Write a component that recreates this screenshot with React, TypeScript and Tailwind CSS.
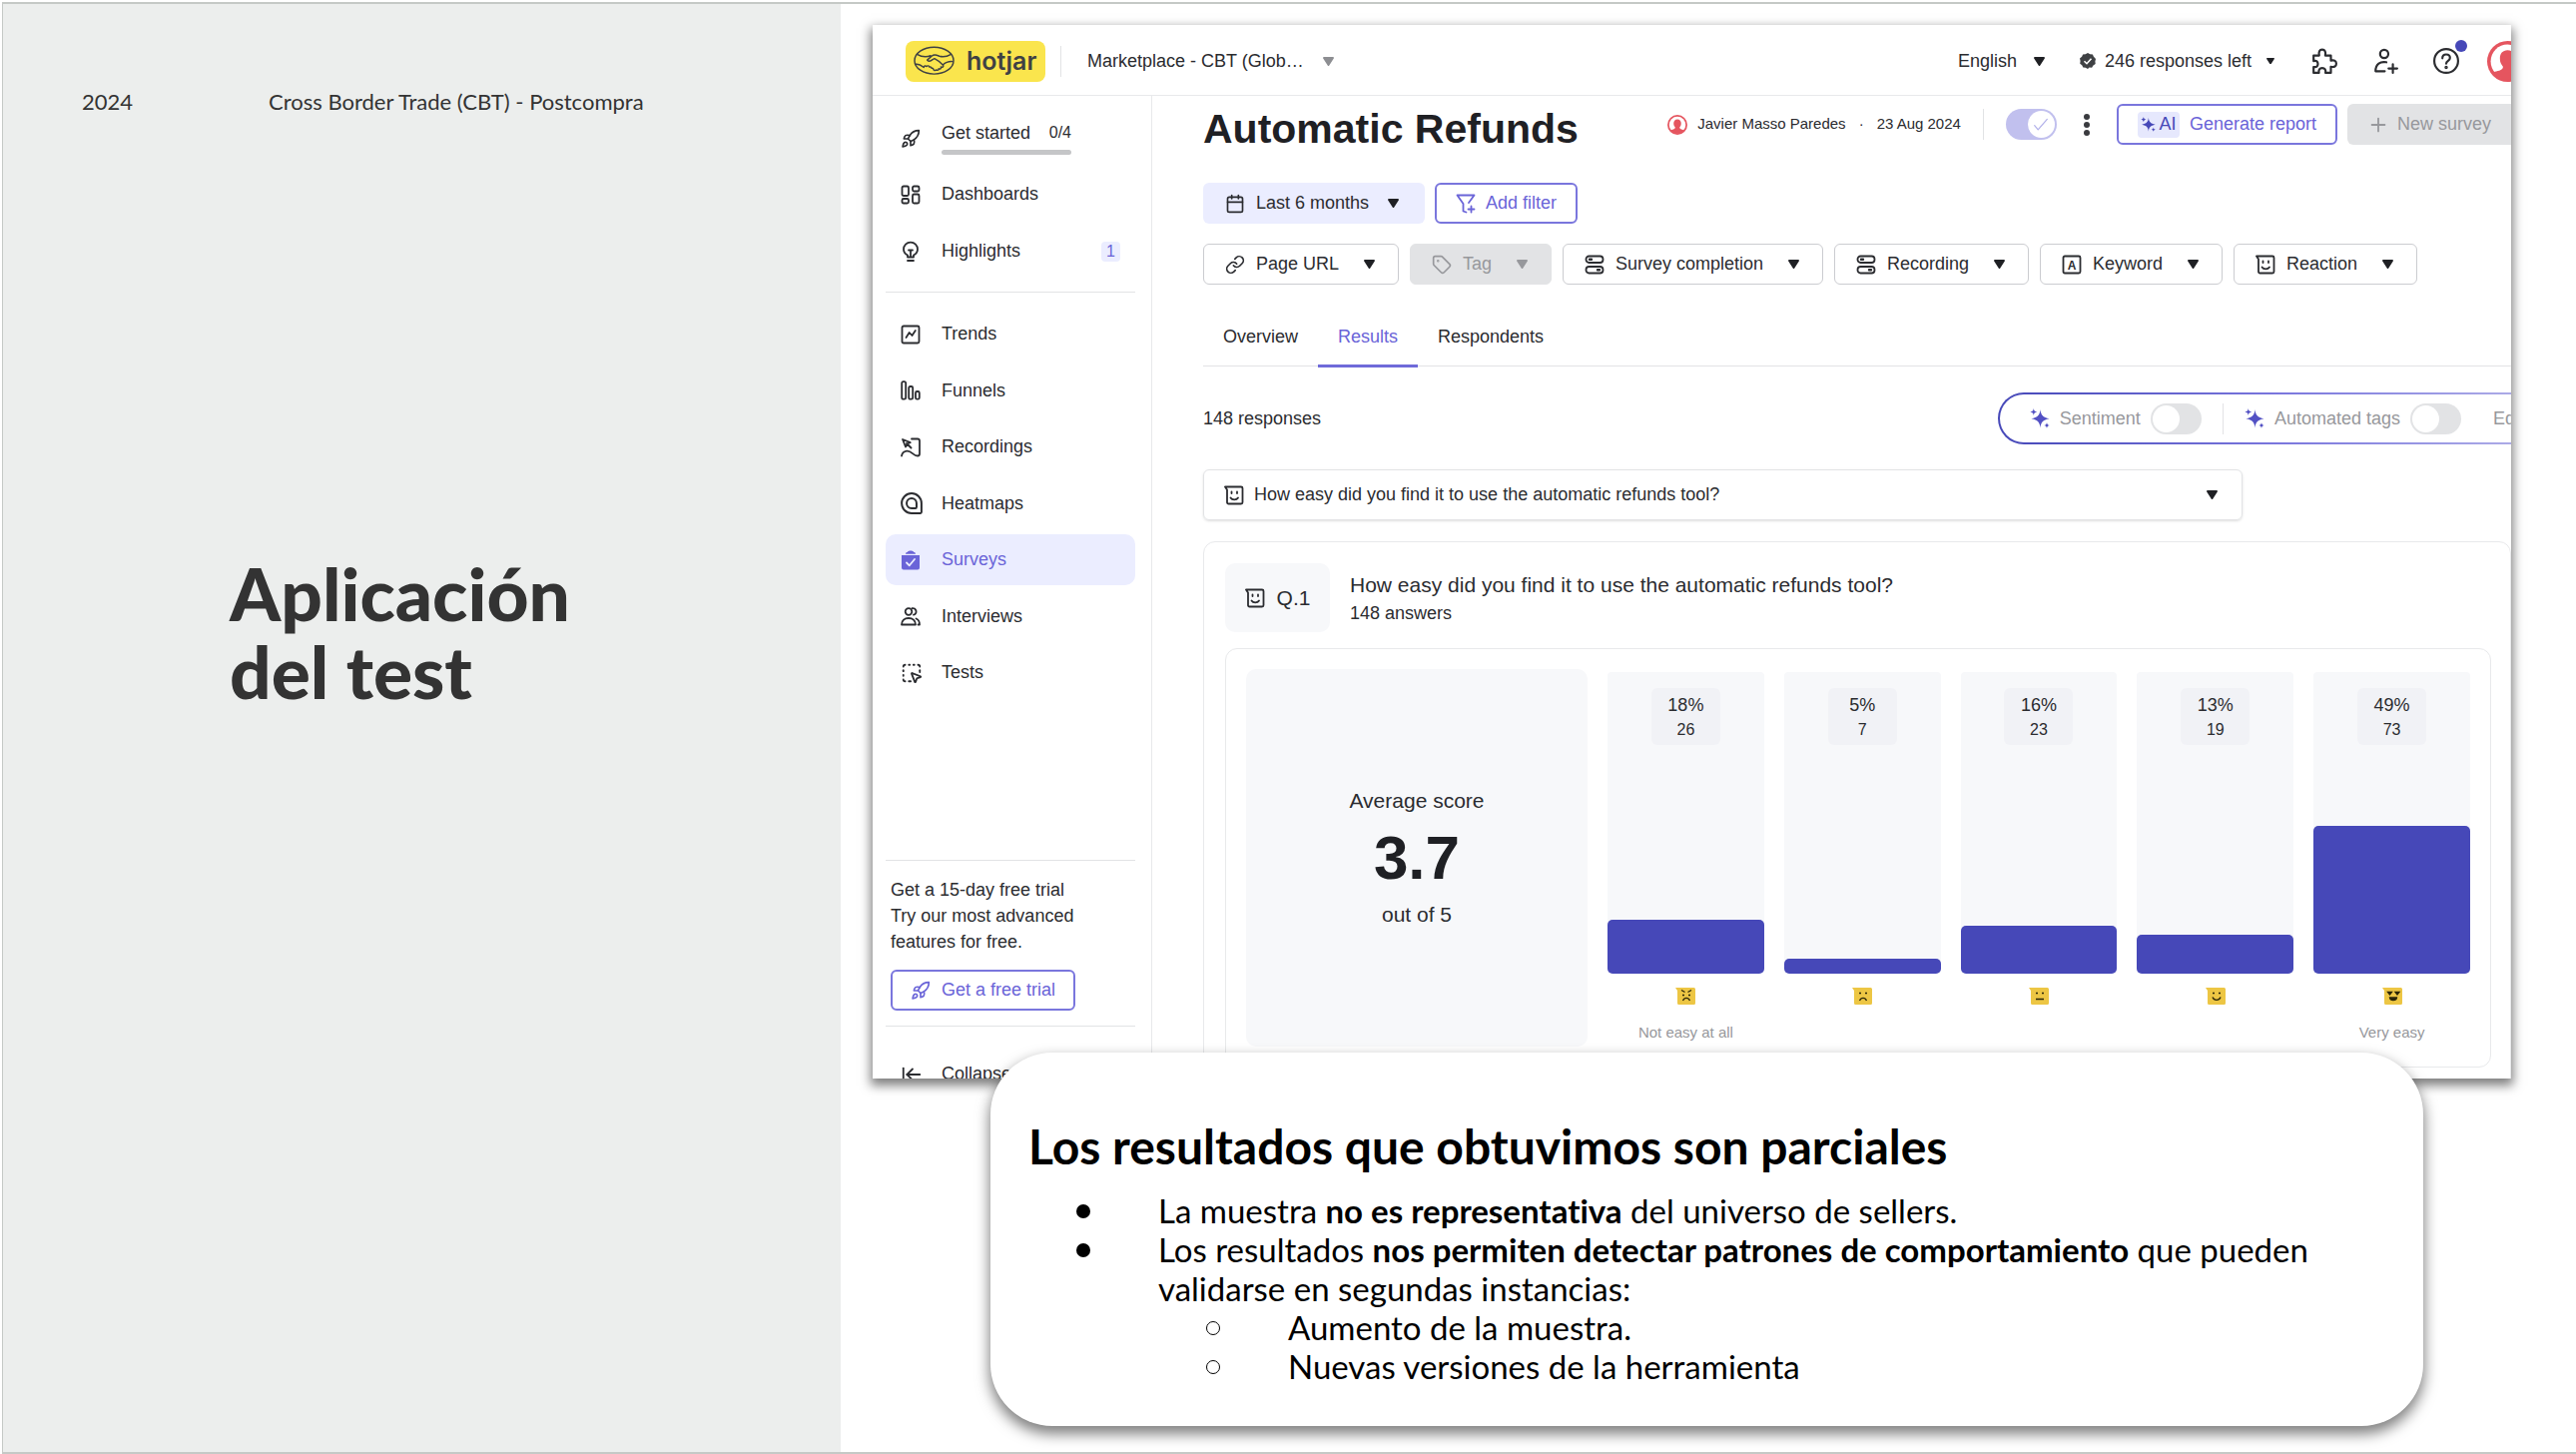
import type { ReactNode } from "react";
import { ArrowLeftToLine, Calendar, Link, Plus, Rocket, SquareDashedMousePointer, Tag } from "lucide-react";

function Icon({ className = "size-5", children }: { className?: string; children: ReactNode }) {
  return (
    <svg
      viewBox="0 0 20 20"
      className={`shrink-0 ${className}`}
      fill="none"
      stroke="currentColor"
      strokeWidth="1.8"
      strokeLinecap="round"
      strokeLinejoin="round"
      aria-hidden="true"
    >
      {children}
    </svg>
  );
}

const DashboardsIcon = () => (
  <Icon>
    <rect x="1.5" y="1.5" width="6.5" height="9.5" rx="1.5" />
    <rect x="12" y="1.5" width="6.5" height="5" rx="1.5" />
    <rect x="1.5" y="14" width="6.5" height="4.5" rx="1.5" />
    <rect x="12" y="9.5" width="6.5" height="9" rx="1.5" />
  </Icon>
);

const BulbIcon = () => (
  <Icon className="h-[22px] w-5">
    <path d="M7 15.5v-2C4.5 12.3 3 10.3 3 7.6a7 7 0 0 1 14 0c0 2.7-1.5 4.7-4 5.9v2zM7 19h6M8 8.5h4M10 8.5v6" />
  </Icon>
);

const TrendsIcon = () => (
  <Icon>
    <rect x="1.5" y="1.5" width="17" height="17" rx="1.5" />
    <path d="M5.5 13l3.2-5 2.8 3 3.3-5" />
  </Icon>
);

const FunnelsIcon = () => (
  <Icon>
    <rect x="1.2" y="1.2" width="4" height="17.5" rx="1.5" />
    <rect x="8.2" y="6" width="4" height="12.7" rx="1.5" />
    <rect x="15" y="11" width="3.8" height="7.7" rx="1.5" />
  </Icon>
);

const RecordingsIcon = () => (
  <Icon>
    <path d="M2 2l3 7.5 1.5-3 3.2-1.4zM6 6l4.5 4.5M11 1.5h6a2 2 0 0 1 2 2v13a2 2 0 0 1-2 2c-4.5 0-6-5.5-11-4.8-2.5.4-4.5 2-5 4.8" />
  </Icon>
);

const HeatmapsIcon = () => (
  <Icon className="size-[22px]">
    <path d="M10 1a9 9 0 1 0 0 18h8a1 1 0 0 0 1-1v-8a9 9 0 0 0-9-9z" />
    <path d="M10 5.5a4.5 4.5 0 1 0 0 9h3.5a1 1 0 0 0 1-1V10a4.5 4.5 0 0 0-4.5-4.5z" />
  </Icon>
);

const SurveysIcon = () => (
  <Icon className="h-[22px] w-5">
    <path d="M1 5h18v12.500a2 2 0 0 1-2 2H3a2 2 0 0 1-2-2zM5 3.800c0-1.200.7-1.800 1.700-1.800C7.500 0 12.500 0 13.300 2c1 0 1.700.6 1.700 1.800z" fill="currentColor" stroke="none" />
    <path d="M6 12.500l2.800 2.800L14 9" stroke="#ebedff" />
  </Icon>
);

const InterviewsIcon = () => (
  <Icon>
    <circle cx="8" cy="5.5" r="3.3" />
    <path d="M11.5 2.2a3.3 3.3 0 1 1 1.5 6.5M1 18.5c0-4 3-6.5 7-6.5s7 2.5 7 6.5zM15.5 12.5c2.2.8 3.5 3 3.5 6h-1.5" />
  </Icon>
);

const SwitchesIcon = () => (
  <Icon>
    <rect x="1.5" y="1.5" width="17" height="6.5" rx="3" />
    <rect x="1.5" y="12" width="17" height="6.5" rx="3" />
    <path d="M5 4.8h2M13 15.2h2" strokeWidth="2.4" />
  </Icon>
);

const KeywordIcon = () => (
  <Icon>
    <rect x="1.5" y="1.5" width="17" height="17" rx="1.5" />
    <text x="10" y="14.5" textAnchor="middle" fontSize="12" fontWeight="700" fill="currentColor" stroke="none">
      A
    </text>
  </Icon>
);

const ReactionIcon = () => (
  <Icon>
    <path d="M1 1.5h16a1.5 1.5 0 0 1 1.5 1.5v14a1.5 1.5 0 0 1-1.5 1.5H4.5A1.5 1.5 0 0 1 3 17V4.5z" />
    <path d="M6.5 12.5c1.5 2.4 6 2.4 7.5 0" />
    <path d="M7.5 6.5v1.5M13 6.5v1.5" />
  </Icon>
);

const FilterPlusIcon = () => (
  <Icon>
    <path d="M1.5 1.5h17L13 9M1.5 1.5L7.5 10v7.5l3 1M15.5 12.5v6M12.5 15.5h6" />
  </Icon>
);

const SparkleIcon = ({ className = "size-5" }: { className?: string }) => (
  <Icon className={className}>
    <g fill="currentColor" stroke="none">
      <path d="M10.5 1c.5 5.500 2.500 8 9 9.200-6.500 1.200-8.500 3.700-9 9.300-.5-5.600-2.500-8.100-9-9.300 6.500-1.200 8.500-3.700 9-9.200z" />
      <path d="M8 7.500h5v5.300H8z" />
      <path d="M3.800 0c.3 2.200 1.200 3.100 3.400 3.500C5 3.900 4.100 4.800 3.800 7 3.500 4.800 2.600 3.900.4 3.500 2.600 3.100 3.500 2.200 3.800 0z" />
      <path d="M17 14c.2 1.900 1 2.700 2.900 3-1.900.3-2.700 1.100-2.900 3-.2-1.900-1-2.700-2.900-3 1.900-.3 2.700-1.100 2.900-3z" />
    </g>
  </Icon>
);

const PuzzleIcon = () => (
  <svg viewBox="0 0 24 24" className="size-[26px] shrink-0" fill="none" stroke="currentColor" strokeWidth="2" strokeLinejoin="round" aria-hidden="true">
    <path d="M2 7h5.200C6.500 3.500 7.500 1.500 10 1.500S13.500 3.500 12.800 7H18v4.700c3.300-.7 5 .3 5 2.800s-1.700 3.500-5 2.800V23h-5c.6-3-.6-4.500-3-4.500S6.400 20 7 23H2v-5.500c2.800.6 4-.6 4-2.700s-1.200-3.300-4-2.700z" />
  </svg>
);

const UserPlusIcon = () => (
  <svg viewBox="0 0 24 24" className="size-[26px] shrink-0" fill="none" stroke="currentColor" strokeWidth="2" strokeLinecap="round" strokeLinejoin="round" aria-hidden="true">
    <circle cx="11" cy="5.5" r="3.8" />
    <path d="M13 13.2c-5.5-1-10 1.3-10 8.3h8.5M19 15v8M15 19h8" />
  </svg>
);

const HelpIcon = () => (
  <svg viewBox="0 0 24 24" className="size-[26px] shrink-0" fill="none" stroke="currentColor" strokeWidth="2" strokeLinecap="round" aria-hidden="true">
    <circle cx="12" cy="12" r="11" />
    <path d="M8.5 9.5c0-2.3 1.5-3.5 3.5-3.5s3.5 1.2 3.5 3.2c0 2.600-3.500 2.600-3.500 5.300" />
    <circle cx="12" cy="18" r="0.6" fill="currentColor" />
  </svg>
);

function Caret({ className = "w-[11px] text-[#1f2024]" }: { className?: string }) {
  return (
    <svg viewBox="0 0 11 9" className={`shrink-0 ${className}`} fill="currentColor" aria-hidden="true">
      <path d="M1 0h9c.9 0 1.200.8.800 1.500L6.300 8.400c-.4.700-1.200.7-1.600 0L.2 1.500C-.2.800.1 0 1 0z" />
    </svg>
  );
}

function Avatar({ className }: { className: string }) {
  return (
    <svg viewBox="0 0 40 40" className={`shrink-0 ${className}`} aria-hidden="true">
      <circle cx="20" cy="20" r="20" fill="#e5555f" />
      <circle cx="20" cy="20" r="16.5" fill="#fff" />
      <path d="M20 9c-5 0-7.500 3.500-7.500 8 0 3.500 1 5.500 3 8 .5 4-6.500 4.500-9 5.500a16.500 16.500 0 0 0 27 0c-2.500-1-9.500-1.500-9-5.500 2-2.500 3-4.500 3-8 0-4.500-2.500-8-7.500-8z" fill="#e5555f" />
    </svg>
  );
}

function Dropdown({ icon, label, disabled }: { icon: ReactNode; label: string; disabled?: boolean }) {
  return (
    <label
      className={`flex h-[41px] items-center rounded-md border pr-[23px] pl-[21px] ${
        disabled ? "border-[#e2e3e5] bg-[#e2e3e5] text-[#97989c]" : "border-[#cbccd0] bg-white"
      }`}
    >
      {icon}
      <select aria-label={label} disabled={disabled} className="mr-6 ml-[11px] appearance-none outline-none">
        <option>{label}</option>
      </select>
      <Caret className={disabled ? "w-[11px] text-[#97989c]" : "w-[11px] text-[#1f2024]"} />
    </label>
  );
}

function Toggle({ label, on }: { label: string; on?: boolean }) {
  return (
    <span className="relative flex shrink-0">
      <input
        type="checkbox"
        aria-label={label}
        defaultChecked={on}
        className="flex h-[31px] w-[51px] appearance-none items-center rounded-full bg-[#e2e3e5] px-[2px] before:size-[27px] before:rounded-full before:bg-white checked:justify-end checked:bg-[#c1c0ee]"
      />
      {on && (
        <Icon className="pointer-events-none absolute top-[9px] right-[9px] size-[14px] text-[#b3b2ea]">
          <path d="M1 11l5 6L19 2" />
        </Icon>
      )}
    </span>
  );
}

const topNav = [
  { label: "Dashboards", icon: <DashboardsIcon /> },
  { label: "Highlights", icon: <BulbIcon />, badge: "1" },
];

const mainNav = [
  { label: "Trends", icon: <TrendsIcon /> },
  { label: "Funnels", icon: <FunnelsIcon /> },
  { label: "Recordings", icon: <RecordingsIcon /> },
  { label: "Heatmaps", icon: <HeatmapsIcon /> },
  { label: "Surveys", icon: <SurveysIcon />, active: true },
  { label: "Interviews", icon: <InterviewsIcon /> },
  { label: "Tests", icon: <SquareDashedMousePointer className="size-[22px]" /> },
];

const tabs = ["Overview", "Results", "Respondents"];

const scores = [
  { percent: 18, count: 26, face: "angry", caption: "Not easy at all" },
  { percent: 5, count: 7, face: "sad", caption: "" },
  { percent: 16, count: 23, face: "neutral", caption: "" },
  { percent: 13, count: 19, face: "happy", caption: "" },
  { percent: 49, count: 73, face: "delighted", caption: "Very easy" },
];

function Face({ mood }: { mood: string }) {
  return (
    <svg viewBox="0 0 20 17" className="h-[17px] w-5" fill="none" stroke="#2b2608" strokeWidth="1.3" aria-hidden="true">
      <path d="M0 0h18.5A1.5 1.5 0 0 1 20 1.5v14a1.5 1.5 0 0 1-1.5 1.5h-15A1.5 1.5 0 0 1 2 15.5V3z" fill="#edc644" stroke="none" />
      {mood === "angry" && <path d="M6 2.5l3.500 2M16 2.500l-3.500 2M7 7.500h2M13 7.500h2M7.500 13c1.500-3.500 5.500-3.500 7 0" />}
      {mood === "sad" && <path d="M7 5.500h2M13 5.500h2M7.500 13c1.500-3.500 5.500-3.500 7 0" />}
      {mood === "neutral" && <path d="M7 5.500h2M13 5.500h2M7 11.500h8" />}
      {mood === "happy" && <path d="M7 5.500h2M13 5.500h2M7 9.500c1.500 3.800 6.500 3.800 8 0" />}
      {mood === "delighted" && (
        <path d="M5.5 4.500h4L7.500 7zM13 4.500h4L15 7zM7.500 10h7c-.5 3.500-6.500 3.500-7 0z" fill="#2b2608" />
      )}
    </svg>
  );
}

function NavItem({ label, icon, badge, active }: { label: string; icon: ReactNode; badge?: string; active?: boolean }) {
  return (
    <a
      href="#"
      className={`flex h-[51px] items-center rounded-[10px] px-[15px] ${active ? "bg-[#ebedff] text-[#6a64d8]" : ""}`}
    >
      <span className="flex w-[41px]">{icon}</span>
      {label}
      {badge && (
        <span className="ml-auto flex h-5 w-[19px] items-center justify-center rounded bg-[#ebedff] text-[16px] text-[#6a64d8]">
          {badge}
        </span>
      )}
    </a>
  );
}

function TopBar() {
  return (
    <header className="flex h-[71px] items-center border-b border-[#e8e9eb] pt-[2px] pl-[33px]">
      <div className="flex h-[41px] w-[140px] shrink-0 items-center rounded-lg bg-[#fae54d] pl-2 text-[#3f4144]">
        <svg viewBox="0 0 42 30" className="w-[41px]" fill="none" stroke="currentColor" strokeWidth="1.5" strokeLinecap="round" strokeLinejoin="round" aria-hidden="true">
          <ellipse cx="21" cy="15" rx="20" ry="13.8" />
          <path d="M3.5 8.500c5 3 9 3.500 14 1.500M38.500 8.500c-4.500 2.600-8 3.200-12 2-4-1.500-5.500-2-8 0l-4.500 4c1.500 1.500 3.500 1.200 5.500-.5l2-1c3 1.500 6 4 8.500 6.500 1.500 1.500-.5 3-2 2 1 1.500-.8 2.800-2.200 1.800.5 1.500-1.600 2-2.600 1.200-1 1-2.700.6-2.900-.6-.2-1-1-1.300-1.800-1-.3-1.200-1.300-1.600-2.200-1.200-.4-1.500-2.200-1.800-3-.6-1-1.200-2.700-.6-2.800.9-2.500-2-5-3.800-8.500-3.300M30 19.500c3-2.800 6-3.800 10-3.500" />
        </svg>
        <span className="ml-3 font-['Inter'] text-[25px] leading-none font-semibold">hotjar</span>
      </div>
      <span className="mx-[15px] h-[31px] w-px shrink-0 bg-[#e2e3e5]" />
      <label className="ml-[11px] flex items-center gap-[18px]">
        <select aria-label="Site" className="appearance-none outline-none">
          <option>Marketplace - CBT (Glob…</option>
        </select>
        <Caret className="w-[11px] text-[#8d8e92]" />
      </label>

      <div className="-mr-[17px] ml-auto flex items-center gap-[35px]">
        <label className="flex items-center gap-4">
          <select aria-label="Language" className="appearance-none outline-none">
            <option>English</option>
          </select>
          <Caret />
        </label>
        <label className="flex items-center">
          <svg viewBox="0 0 16 16" className="mr-[9px] size-4" aria-hidden="true">
            <path d="M8 0l2.300 1.200 2.600.2 1 2.400L16 6l-.6 2.500.3 2.600-2.200 1.400-1.400 2.200-2.600-.1L8 16l-2.200-1.300-2.500-.2-1.100-2.300L.2 10.700.6 8 0 5.500l2.100-1.700 1-2.400 2.600-.2z" fill="#3f4144" />
            <path d="M4.5 8.200L7 10.700l4.500-5" fill="none" stroke="#fff" strokeWidth="1.6" />
          </svg>
          <select aria-label="Responses left" className="mr-[14px] appearance-none outline-none">
            <option>246 responses left</option>
          </select>
          <Caret className="mr-[2px] w-2 text-[#1f2024]" />
        </label>
        <button aria-label="Integrations">
          <PuzzleIcon />
        </button>
        <button aria-label="Invite">
          <UserPlusIcon />
        </button>
        <button aria-label="Help" className="relative">
          <HelpIcon />
          <span className="absolute -top-2 -right-2 size-3 rounded-full bg-[#4648b8]" />
        </button>
        <button aria-label="Account" className="-ml-[7px]">
          <Avatar className="size-[41px]" />
        </button>
      </div>
    </header>
  );
}

function Sidebar() {
  return (
    <nav className="flex w-[280px] shrink-0 flex-col border-r border-[#e8e9eb] pt-5 pr-4 pl-[13px]">
      <a href="#" className="flex h-[43px] items-center px-[15px]">
        <span className="flex w-[41px] pt-[3px]">
          <Rocket className="size-5" />
        </span>
        <span className="w-[130px]">
          <span className="flex justify-between leading-[26px]">
            Get started <span className="text-[16px]">0/4</span>
          </span>
          <span className="mt-1 block h-[5px] rounded-full bg-[#c5c6c8]" />
        </span>
      </a>
      <div className="mt-[10px] flex flex-col gap-[6px]">
        {topNav.map((item) => (
          <NavItem key={item.label} {...item} />
        ))}
      </div>
      <hr className="mt-[15px] border-[#e2e3e5]" />
      <div className="mt-4 flex h-[390px] flex-col justify-between">
        {mainNav.map((item) => (
          <NavItem key={item.label} {...item} />
        ))}
      </div>
      <div className="mt-[162px] border-y border-[#e2e3e5] pt-4 pb-[15px] pl-[5px]">
        <p className="leading-[26px]">
          Get a 15-day free trial
          <br />
          Try our most advanced
          <br />
          features for free.
        </p>
        <button className="mt-[15px] flex h-[41px] items-center rounded-md border-2 border-[#7a76dd] px-[18px] text-[#6a64d8]">
          <Rocket className="mr-[11px] size-5" />
          Get a free trial
        </button>
      </div>
      <button className="mt-[22px] flex h-[51px] shrink-0 items-center px-[15px]">
        <span className="flex w-[41px]">
          <ArrowLeftToLine className="size-[22px]" />
        </span>
        Collapse
      </button>
    </nav>
  );
}

function ScoreChart() {
  return (
    <div className="flex h-[420px] gap-5 rounded-xl border border-[#e8e9eb] p-5">
      <div className="flex w-[342px] shrink-0 flex-col items-center justify-center rounded-[10px] bg-[#f7f8fa] text-[21px]">
        <p className="leading-7">Average score</p>
        <p className="my-3 text-[62px] leading-[62px] font-bold text-[#1f2024]">3.7</p>
        <p className="leading-7">out of 5</p>
      </div>
      <div className="grid flex-1 grid-cols-5 gap-5 pt-[3px]">
        {scores.map((score) => (
          <div key={score.face} className="flex flex-col items-center">
            <div className="flex h-[302px] w-full flex-col items-center justify-between rounded bg-[#f7f8fa]">
              <div className="mt-4 -mb-3 flex h-[57px] w-[69px] shrink-0 flex-col items-center justify-center rounded-md bg-[#f1f2f6]">
                <span className="leading-[26px]">{score.percent}%</span>
                <span className="text-[16px] leading-6">{score.count}</span>
              </div>
              <div className="w-full rounded-[5px] bg-[#4648b8]" style={{ height: `${score.percent}%` }} />
            </div>
            <div className="mt-[14px]">
              <Face mood={score.face} />
            </div>
            <p className="mt-[18px] text-[15px] leading-5 text-[#97989c]">{score.caption}</p>
          </div>
        ))}
      </div>
    </div>
  );
}

function SurveyResults() {
  return (
    <main className="min-w-0 flex-1 pt-2 pl-[51px]">
      <div className="flex h-[41px] items-center">
        <h2 className="pt-[10px] text-[41px] leading-[41px] font-bold whitespace-nowrap text-[#1f2024]">Automatic Refunds</h2>
        <div className="ml-auto flex shrink-0 items-center text-[15px]">
          <Avatar className="mr-[10px] size-5" />
          Javier Masso Paredes
          <span className="mx-[13px]">·</span>
          23 Aug 2024
          <span className="mx-[22px] h-[31px] w-px bg-[#e2e3e5]" />
          <Toggle label="Survey active" on />
          <button aria-label="More options" className="mx-[27px] flex flex-col gap-[2px]">
            <span className="size-[6px] rounded-full bg-[#3a3b3f]" />
            <span className="size-[6px] rounded-full bg-[#3a3b3f]" />
            <span className="size-[6px] rounded-full bg-[#3a3b3f]" />
          </button>
        </div>
        <button className="flex h-[41px] shrink-0 items-center gap-[10px] rounded-md border-2 border-[#7a76dd] px-[19px] text-[#6a64d8]">
          <span className="flex h-[26px] w-[42px] items-center justify-center gap-[3px] rounded bg-[#e6e8fd] text-[#4648b8]">
            <SparkleIcon className="size-[15px]" />
            AI
          </span>
          Generate report
        </button>
        <button disabled className="ml-[10px] flex h-[41px] shrink-0 items-center gap-2 rounded-l-md bg-[#e2e3e5] px-5 text-[#97989c]">
          <Plus className="size-[22px]" strokeWidth={2} />
          New survey
        </button>
      </div>

      <div className="mt-[38px] flex gap-[10px]">
        <label className="flex h-[41px] items-center rounded-md bg-[#ebedff] pr-[26px] pl-[22px]">
          <Calendar className="size-5" />
          <select aria-label="Date range" className="mr-[18px] ml-[11px] appearance-none outline-none">
            <option>Last 6 months</option>
          </select>
          <Caret />
        </label>
        <button className="flex h-[41px] items-center gap-[10px] rounded-md border-2 border-[#7a76dd] px-[19px] text-[#6a64d8]">
          <FilterPlusIcon />
          Add filter
        </button>
      </div>

      <div className="mt-5 flex gap-[11px]">
        <Dropdown icon={<Link className="size-5" />} label="Page URL" />
        <Dropdown icon={<Tag className="size-5" />} label="Tag" disabled />
        <Dropdown icon={<SwitchesIcon />} label="Survey completion" />
        <Dropdown icon={<SwitchesIcon />} label="Recording" />
        <Dropdown icon={<KeywordIcon />} label="Keyword" />
        <Dropdown icon={<ReactionIcon />} label="Reaction" />
      </div>

      <div className="mt-5 flex border-b border-[#e2e3e5]">
        {tabs.map((tab) => (
          <button
            key={tab}
            className={`-mb-[2px] h-[63px] border-b-3 px-5 pt-1 ${
              tab === "Results" ? "border-[#6f6ad9] text-[#6a64d8]" : "border-transparent"
            }`}
          >
            {tab}
          </button>
        ))}
      </div>

      <div className="mt-[26px] flex items-center justify-between">
        <p>148 responses</p>
        <div className="-mr-[42px] shrink-0 rounded-full bg-linear-to-r from-[#4648b8] via-[#7a76dd] to-[#b5b3e8] p-[2px]">
          <div className="flex h-12 items-center rounded-full bg-white pr-9 pl-[30px] text-[#97989c]">
            <SparkleIcon className="mr-[10px] size-5 text-[#5351c4]" />
            Sentiment
            <span className="ml-[10px]">
              <Toggle label="Sentiment" />
            </span>
            <span className="mx-[21px] h-[31px] w-px bg-[#e2e3e5]" />
            <SparkleIcon className="mr-[10px] size-5 text-[#5351c4]" />
            Automated tags
            <span className="mr-8 ml-[10px]">
              <Toggle label="Automated tags" />
            </span>
            Ed
          </div>
        </div>
      </div>

      <label className="mt-[25px] flex h-[51px] w-[1041px] items-center rounded-md border border-[#e2e3e5] px-5 shadow-sm">
        <ReactionIcon />
        <select aria-label="Question" className="ml-[10px] flex-1 appearance-none outline-none">
          <option>How easy did you find it to use the automatic refunds tool?</option>
        </select>
        <Caret className="mr-1 w-[11px] text-[#1f2024]" />
      </label>

      <section className="mt-[21px] rounded-xl border border-[#e8e9eb] py-[21px] pr-[19px] pl-[21px]">
        <div className="mb-4 flex items-center">
          <div className="flex h-[69px] w-[105px] items-center justify-center gap-3 rounded-[10px] bg-[#f7f8fa] text-[21px]">
            <ReactionIcon />
            Q.1
          </div>
          <div className="ml-5">
            <h3 className="text-[21px] leading-[31px]">How easy did you find it to use the automatic refunds tool?</h3>
            <p className="leading-[26px]">148 answers</p>
          </div>
        </div>
        <ScoreChart />
      </section>
    </main>
  );
}

export default function App() {
  return (
    <div className="flex min-h-screen bg-white pt-[2px] pl-[2px] font-['Liberation_Sans',sans-serif] text-[18px] text-[#2b2c30]">
      <div className="flex flex-1 border-y-2 border-l border-[#c5c9c6]">
        <aside className="w-[839px] shrink-0 bg-[#eceeed] px-[79px] pt-[82px] font-['Lato',sans-serif] text-[#333]">
          <div className="flex gap-[136px] text-[22px] leading-8">
            <span>2024</span>
            <span>Cross Border Trade (CBT) - Postcompra</span>
          </div>
          <h1 className="mt-[437px] pl-[148px] text-[73px] leading-[78px] font-black">
            Aplicación
            <br />
            del test
          </h1>
        </aside>

        <div className="flex min-w-0 flex-1 flex-col pt-[21px]">
          <div className="mr-[65px] ml-8 h-[1055px] overflow-hidden bg-white shadow-[0_5px_10px_2px_rgba(0,0,0,0.5)]">
            <TopBar />
            <div className="flex">
              <Sidebar />
              <SurveyResults />
            </div>
          </div>

          <section className="relative -mt-[26px] mr-[153px] ml-[150px] rounded-[62px] bg-white pt-[66px] pb-10 pl-[38px] font-['Lato',sans-serif] text-black shadow-[0_7px_14px_1px_rgba(0,0,0,0.5)]">
            <h2 className="text-[48px] leading-[56px] font-bold">Los resultados que obtuvimos son parciales</h2>
            <ul className="mt-[17px] text-[33px] leading-[39px] [font-variant-ligatures:none]">
              <li className="ml-12 flex gap-[68px]">
                <span className="mt-[13px] size-[14px] shrink-0 rounded-full bg-black" />
                <p>
                  La muestra <b>no es representativa</b> del universo de sellers.
                </p>
              </li>
              <li className="ml-12 flex gap-[68px]">
                <span className="mt-[13px] size-[14px] shrink-0 rounded-full bg-black" />
                <div>
                  <p>
                    Los resultados <b>nos permiten detectar patrones de comportamiento</b> que pueden
                    <br />
                    validarse en segundas instancias:
                  </p>
                  <ul>
                    <li className="ml-12 flex gap-[68px]">
                      <span className="mt-[13px] size-[14px] shrink-0 rounded-full border border-black" />
                      Aumento de la muestra.
                    </li>
                    <li className="ml-12 flex gap-[68px]">
                      <span className="mt-[13px] size-[14px] shrink-0 rounded-full border border-black" />
                      Nuevas versiones de la herramienta
                    </li>
                  </ul>
                </div>
              </li>
            </ul>
          </section>
        </div>
      </div>
    </div>
  );
}
